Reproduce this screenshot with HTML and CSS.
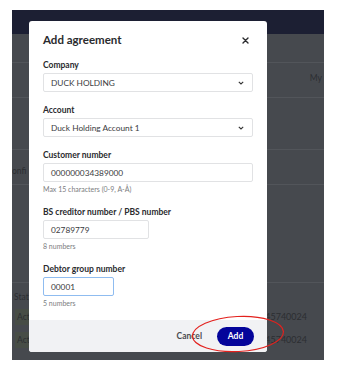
FILE: index.html
```html
<!DOCTYPE html>
<html lang="en">
<head>
  <meta charset="UTF-8">
  <title>Add agreement</title>
  <link rel="stylesheet" href="styles.css">
</head>
<body>
  <div class="screen">
    <div class="app">
      <div class="topbar"></div>
      <div class="row row-a"></div>
      <div class="row row-b"><span class="bg-text">My</span></div>
      <div class="row row-c"></div>
      <div class="row row-d"><span class="bg-text">onfi</span></div>
      <div class="row row-e"></div>
      <div class="table-head"><span class="bg-text">Stat</span></div>
      <div class="table-row"><span class="badge">Acti</span><span class="bg-num">45740024</span></div>
      <div class="table-row"><span class="badge">Acti</span><span class="bg-num">45740024</span></div>
    </div>

    <div class="modal">
      <div class="modal-body">
        <div class="modal-header">
          <h2>Add agreement</h2>
          <svg class="close" width="7" height="7" viewBox="0 0 7 7"><path d="M1 1L6 6M6 1L1 6" stroke="#2a2b2e" stroke-width="1.4" stroke-linecap="round"/></svg>
        </div>

        <div class="field first">
          <label>Company</label>
          <div class="input select">DUCK HOLDING
            <svg class="chevron" width="6" height="4" viewBox="0 0 6 4"><path d="M0.8 0.8L3 3L5.2 0.8" fill="none" stroke="#333" stroke-width="1.1"/></svg>
          </div>
        </div>

        <div class="field">
          <label>Account</label>
          <div class="input select">Duck Holding Account 1
            <svg class="chevron" width="6" height="4" viewBox="0 0 6 4"><path d="M0.8 0.8L3 3L5.2 0.8" fill="none" stroke="#333" stroke-width="1.1"/></svg>
          </div>
        </div>

        <div class="field">
          <label>Customer number</label>
          <div class="input">000000034389000</div>
          <div class="hint">Max 15 characters (0-9, A-Å)</div>
        </div>

        <div class="field">
          <label>BS creditor number / PBS number</label>
          <div class="input medium">02789779</div>
          <div class="hint">8 numbers</div>
        </div>

        <div class="field">
          <label>Debtor group number</label>
          <div class="input short focused">00001</div>
          <div class="hint">5 numbers</div>
        </div>
      </div>

      <div class="modal-footer">
        <span class="cancel">Cancel</span>
        <span class="add">Add</span>
      </div>
    </div>

    <svg class="mark" width="96" height="40" viewBox="0 0 96 40">
      <ellipse cx="48" cy="20" rx="45.5" ry="17.5" transform="rotate(-3 48 20)" fill="none" stroke="#e3211d" stroke-width="1.2"/>
    </svg>
  </div>
</body>
</html>
```

FILE: styles.css
```css
body {
  margin: 0;
  background: #fff;
  font-family: Lato, "Open Sans", sans-serif;
  color: #2a2b2e;
}
.screen {
  position: relative;
  margin: 10px 0 0 12px;
  width: 312px;
  height: 350px;
  background: #46494e;
  overflow: hidden;
}
.topbar {
  height: 24px;
  background: #1c1f33;
}
.row {
  border-bottom: 1px solid #52555a;
  position: relative;
}
.row-a { height: 28px; }
.row-b { height: 34px; }
.row-c { height: 51px; }
.row-d { height: 34px; }
.row-e { height: 97px; }
.bg-text {
  font-size: 8.5px;
  color: #2c2e32;
}
.row-b .bg-text {
  position: absolute;
  right: 2px;
  top: 10px;
}
.row-d .bg-text {
  position: absolute;
  left: 0;
  top: 16px;
}
.table-head {
  height: 22px;
  padding: 1px 0 0 2px;
  box-sizing: border-box;
}
.table-row {
  height: 23px;
  display: flex;
  align-items: center;
  justify-content: space-between;
  padding: 0 17px 0 3px;
}
.badge {
  background: #474d46;
  font-size: 8.5px;
  color: #2c2e32;
  padding: 3px 4px 3px 2px;
}
.bg-num {
  font-size: 9px;
  color: #2c2e32;
}

.modal {
  position: absolute;
  left: 17px;
  top: 11px;
  width: 238px;
  background: #fff;
  border-radius: 3px;
  overflow: hidden;
}
.modal-body {
  padding: 11px 14px 12px 14px;
}
.modal-header {
  display: flex;
  align-items: center;
  justify-content: space-between;
  height: 16px;
}
.modal-header h2 {
  margin: 0;
  font-size: 11.5px;
  font-weight: 700;
  line-height: 16px;
}
.close {
  margin-right: 4px;
}
.field {
  margin-top: 12px;
}
.field.first {
  margin-top: 11px;
}
.field label {
  display: block;
  font-size: 8.5px;
  font-weight: 700;
  line-height: 12px;
  margin-bottom: 2px;
}
.input {
  height: 19px;
  box-sizing: border-box;
  border: 1px solid #e1e2e4;
  border-radius: 2px;
  padding: 0 7px;
  display: flex;
  align-items: center;
  font-size: 8.3px;
  color: #3a3b3e;
}
.select {
  justify-content: space-between;
}
.chevron {
  margin-right: 1px;
}
.medium { width: 106px; }
.short { width: 71px; }
.focused {
  border: 1.5px solid #8fbcf0;
}
.hint {
  margin-top: 2px;
  font-size: 7px;
  line-height: 10px;
  color: #7b7c80;
}
.modal-footer {
  height: 32px;
  background: #f1f2f4;
  display: flex;
  align-items: center;
  justify-content: flex-end;
  padding-right: 13px;
  gap: 15px;
}
.cancel {
  font-size: 8.5px;
  font-weight: 700;
  color: #4a4b4f;
}
.add {
  width: 37px;
  height: 19px;
  border-radius: 10px;
  background: #04049a;
  color: #fff;
  font-size: 8.5px;
  font-weight: 700;
  display: flex;
  align-items: center;
  justify-content: center;
}
.mark {
  position: absolute;
  left: 178px;
  top: 304px;
}
```
